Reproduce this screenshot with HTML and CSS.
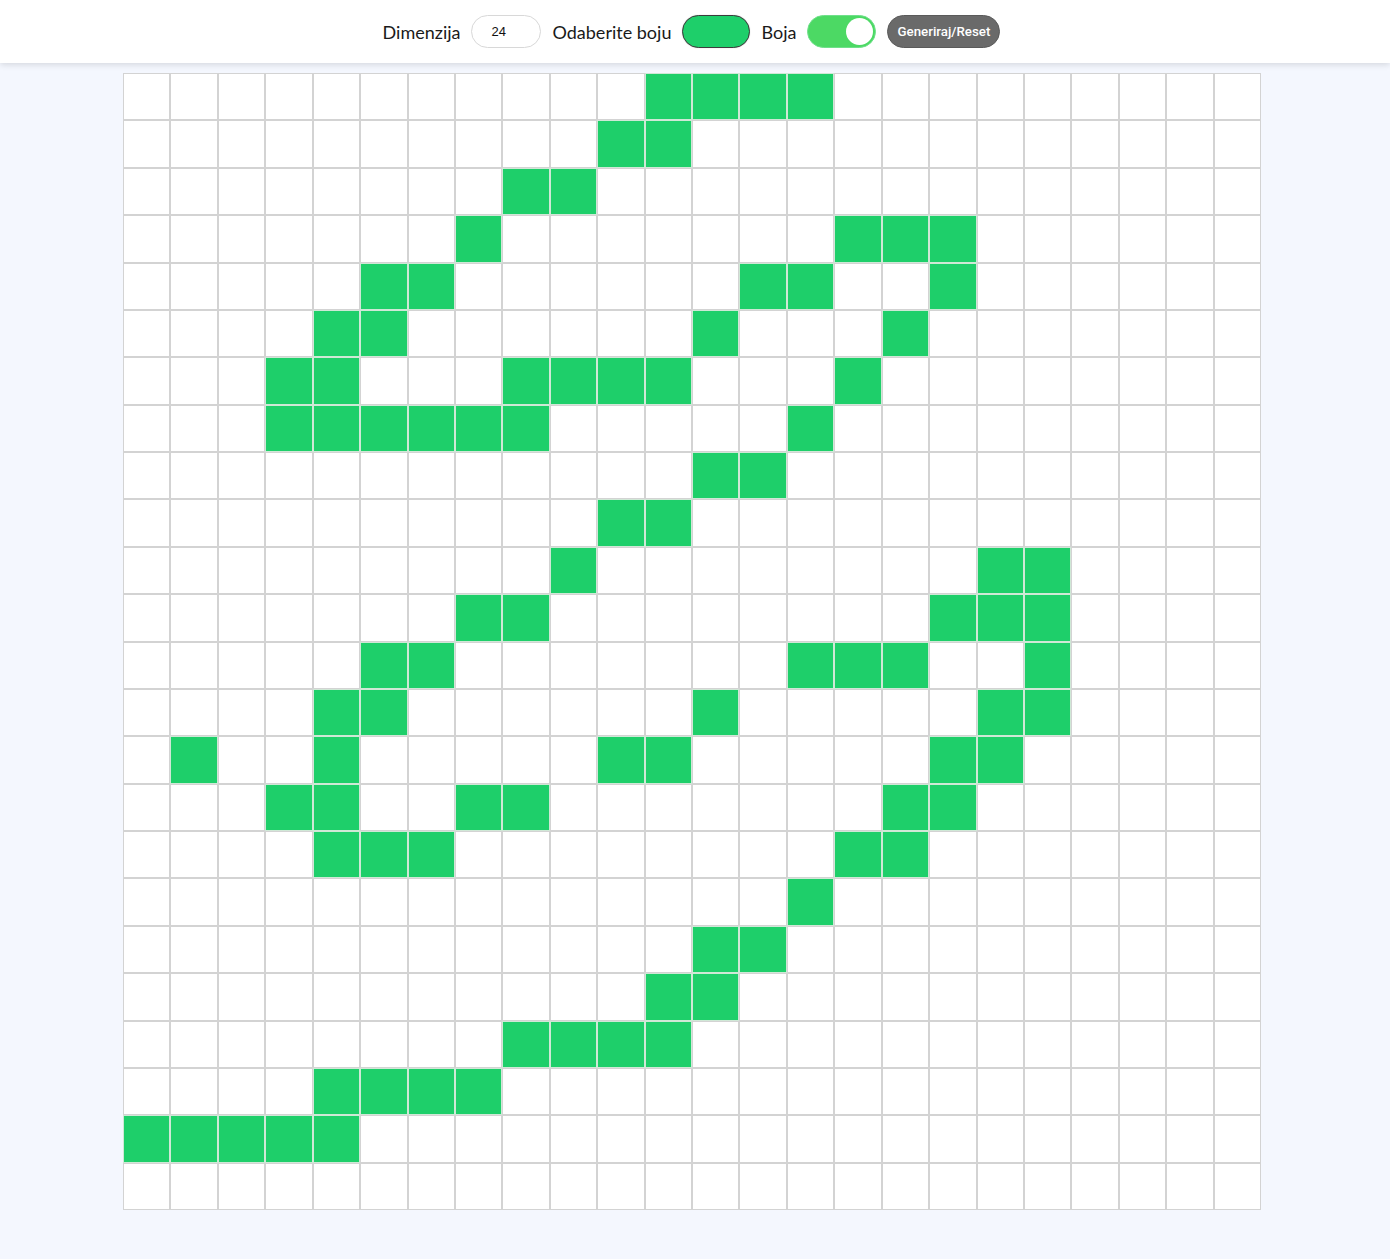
FILE: index.html
```html
<!DOCTYPE html>
<html lang="hr">
<head>
<meta charset="utf-8">
<title>Pixel grid</title>
<link rel="stylesheet" href="styles.css">
</head>
<body>
<header class="toolbar">
  <label class="lbl">Dimenzija</label>
  <div class="num-input">24</div>
  <label class="lbl">Odaberite boju</label>
  <div class="swatch"><span class="swatch-fill"></span></div>
  <label class="lbl">Boja</label>
  <div class="toggle"><span class="knob"></span></div>
  <button class="btn">Generiraj/Reset</button>
</header>
<main class="wrap">
  <div class="grid" id="grid"></div>
</main>
<script src="app.js"></script>
</body>
</html>
```
FILE: styles.css
```css
html, body { margin: 0; padding: 0; }
body {
  background: #f4f7fe;
  font-family: Lato, "Open Sans", sans-serif;
  color: #1a1a1a;
  min-height: 1259px;
}
.toolbar {
  height: 63px;
  background: #fff;
  box-shadow: 0 2px 6px rgba(0,0,0,0.12);
  display: flex;
  align-items: center;
  justify-content: center;
  gap: 11px;
  padding-right: 7px;
  box-sizing: border-box;
}
.lbl { font-size: 18px; line-height: 1; }
.num-input {
  width: 70px;
  height: 33px;
  box-sizing: border-box;
  border: 1px solid #d8d8d8;
  border-radius: 17px;
  font-family: "Liberation Sans", Arial, sans-serif;
  font-size: 13px;
  display: flex;
  align-items: center;
  padding-left: 19px;
  color: #111;
}
.swatch {
  width: 68px;
  height: 33px;
  box-sizing: border-box;
  border-radius: 17px;
  border: 1px solid #3c3c3c;
  background: #1ecf6a;
  box-shadow: 0 0 1px rgba(0,0,0,0.3);
}
.toggle {
  width: 69px;
  height: 33px;
  box-sizing: border-box;
  border-radius: 17px;
  background: #4cd964;
  border: 1px solid #6fe08a;
  position: relative;
}
.knob {
  position: absolute;
  top: 2px;
  right: 2px;
  width: 27px;
  height: 27px;
  border-radius: 50%;
  background: #fff;
}
.btn {
  width: 113px;
  height: 33px;
  border: 1px solid #5a5a5a;
  border-radius: 17px;
  background: #6a6a6a;
  color: #fff;
  font-family: Roboto, "Liberation Sans", sans-serif;
  font-weight: 500;
  font-size: 13.3px;
  padding: 0;
}
.wrap {
  display: flex;
  justify-content: center;
  padding-top: 10px;
  padding-right: 6px;
}
.grid {
  width: 1138px;
  height: 1137px;
  display: grid;
  grid-template-columns: repeat(24, 1fr);
  grid-template-rows: repeat(24, 1fr);
  background: #fff;
}
.cell {
  border: 1px solid #d3d3d3;
  background: #fff;
}
.cell.on {
  background: #1ecf6a;
  border-color: #cfe8d6;
}
```
FILE: app.js
```js
var on = {
  0:[11,12,13,14],
  1:[10,11],
  2:[8,9],
  3:[7,15,16,17],
  4:[5,6,13,14,17],
  5:[4,5,12,16],
  6:[3,4,8,9,10,11,15],
  7:[3,4,5,6,7,8,14],
  8:[12,13],
  9:[10,11],
  10:[9,18,19],
  11:[7,8,17,18,19],
  12:[5,6,14,15,16,19],
  13:[4,5,12,18,19],
  14:[1,4,10,11,17,18],
  15:[3,4,7,8,16,17],
  16:[4,5,6,15,16],
  17:[14],
  18:[12,13],
  19:[11,12],
  20:[8,9,10,11],
  21:[4,5,6,7],
  22:[0,1,2,3,4],
  23:[]
};
var g = document.getElementById('grid');
for (var r = 0; r < 24; r++) {
  for (var c = 0; c < 24; c++) {
    var d = document.createElement('div');
    d.className = 'cell' + (on[r].indexOf(c) >= 0 ? ' on' : '');
    g.appendChild(d);
  }
}
```
